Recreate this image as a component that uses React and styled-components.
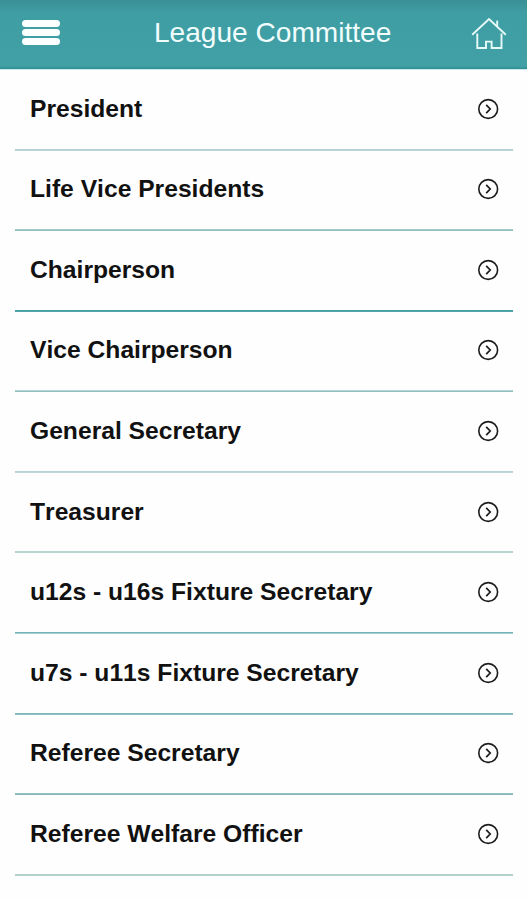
import React from 'react';
import styled, { createGlobalStyle } from 'styled-components';

const roles = [
  { name: 'President', line: ['#b3d0d3', '#b9d3d6'] },
  { name: 'Life Vice Presidents', line: ['#a3c9c9', '#93bdbe'] },
  { name: 'Chairperson', line: ['#46a0a5', '#4fa5a9'] },
  { name: 'Vice Chairperson', line: ['#b4d4d4', '#8fbfc0'] },
  { name: 'General Secretary', line: ['#b8d2d2', '#bdd5d4'] },
  { name: 'Treasurer', line: ['#b5d3cf', '#b5d3cf'] },
  { name: 'u12s - u16s Fixture Secretary', line: ['#72b4b7', '#a6cfd1'] },
  { name: 'u7s - u11s Fixture Secretary', line: ['#7ab7ba', '#8fc1c4'] },
  { name: 'Referee Secretary', line: ['#8fbfc2', '#84b8bb'] },
  { name: 'Referee Welfare Officer', line: ['#b3d1cb', '#b3d1cb'] },
];

function App() {
  return (
    <>
      <GlobalStyle />
      <Header>
        <MenuButton>
          <Bar />
          <Bar />
          <Bar />
        </MenuButton>
        <Title>League Committee</Title>
        <HomeIcon />
      </Header>
      <List>
        {roles.map((role) => (
          <Row key={role.name} $line={role.line}>
            <Name>{role.name}</Name>
            <ArrowIcon />
          </Row>
        ))}
      </List>
    </>
  );
}

function HomeIcon() {
  return (
    <HomeSvg viewBox="0 0 36 34" fill="none" stroke="#e6fafa" strokeWidth="1.9">
      <path d="M1.2 18.8 L18 3 L34.8 18.8" />
      <path d="M26.2 10.4 V4.6" />
      <path d="M6.3 17.5 V32 H15 V25.6 H20.6 V32 H30.5 V17.5" />
    </HomeSvg>
  );
}

function ArrowIcon() {
  return (
    <ArrowSvg viewBox="0 0 22 22" fill="none" stroke="#1c1c1c">
      <circle cx="11.2" cy="11" r="9.4" strokeWidth="1.6" />
      <path d="M9.2 6.9 L13.2 11 L9.2 15.1" strokeWidth="1.7" />
    </ArrowSvg>
  );
}

const GlobalStyle = createGlobalStyle`
  body {
    margin: 0;
    background: #fefefe;
    font-family: "Liberation Sans", Arial, sans-serif;
    font-kerning: none;
  }
`;
const Header = styled.header`
  display: flex;
  align-items: center;
  box-sizing: border-box;
  height: 70px;
  padding: 0 20px 4px 22px;
  border-bottom: 1px solid #c9e8e9;
  background: linear-gradient(#3a9097 0, #3f9ea4 14px, #40a0a6 66px, #2f8e94 69px);
`;
const MenuButton = styled.button`
  display: flex;
  flex-direction: column;
  gap: 2px;
  width: 38px;
  padding: 0;
  border: 0;
  background: none;
`;
const Bar = styled.span`
  width: 38px;
  height: 7px;
  border-radius: 3.5px;
  background: #fafefe;
`;
const Title = styled.h1`
  margin: 0 auto 0 94px;
  font-size: 28.1px;
  font-weight: 400;
  line-height: 32px;
  color: #f1fdfd;
`;
const HomeSvg = styled.svg`
  width: 36px;
  height: 34px;
`;
const List = styled.ul`
  margin: 0;
  padding: 0 14px 0 15px;
  list-style: none;
`;
const Row = styled.li`
  display: flex;
  align-items: center;
  justify-content: space-between;
  box-sizing: border-box;
  height: 80.57px;
  padding: 0 14px 3px 15px;
  background: linear-gradient(
      ${(props) => props.$line[0]} 50%,
      ${(props) => props.$line[1]} 50%
    )
    bottom / 100% 2px no-repeat;
`;
const Name = styled.span`
  font-size: 24.65px;
  font-weight: 700;
  line-height: 28px;
  white-space: nowrap;
  color: #111;
`;
const ArrowSvg = styled.svg`
  width: 22px;
  height: 22px;
`;

export default App;
